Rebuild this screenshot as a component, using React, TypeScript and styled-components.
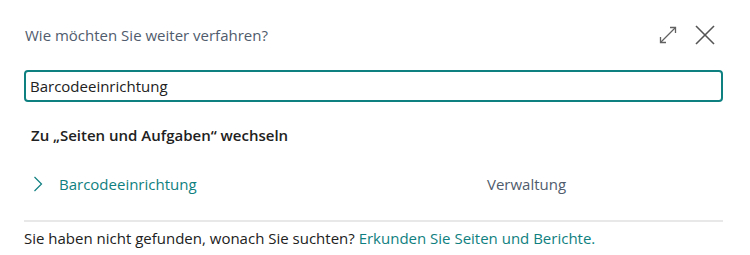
import styled, { createGlobalStyle } from 'styled-components';

const GlobalStyle = createGlobalStyle`
  html, body {
    margin: 0;
    padding: 0;
    background: #ffffff;
  }
  body {
    font-family: 'Open Sans', 'Noto Sans', sans-serif;
    color: #212121;
  }
`;

const Dialog = styled.div`
  width: 750px;
  height: 255px;
  box-sizing: border-box;
  padding: 24px 27px 0 24px;
  background: #ffffff;
`;

const Header = styled.div`
  display: flex;
  align-items: center;
  justify-content: space-between;
  height: 22px;
`;

const Title = styled.h1`
  margin: 0 0 0 1px;
  font-size: 15px;
  font-weight: 400;
  color: #505c6d;
`;

const Actions = styled.div`
  display: flex;
  align-items: center;
  gap: 17px;
  margin-right: 8px;
`;

const IconButton = styled.button`
  display: flex;
  align-items: center;
  justify-content: center;
  padding: 0;
  border: 0;
  background: none;
  cursor: pointer;
`;

const SearchInput = styled.input`
  display: block;
  width: 100%;
  height: 32px;
  margin-top: 24px;
  box-sizing: border-box;
  padding: 0 4px;
  border: 2px solid #0f8080;
  border-radius: 4px;
  font-family: inherit;
  font-size: 15px;
  color: #212121;
  outline: none;
`;

const SectionHeading = styled.h2`
  margin: 22px 0 0 7px;
  font-size: 15px;
  line-height: 22px;
  font-weight: 600;
  color: #212121;
`;

const ResultRow = styled.div`
  display: grid;
  grid-template-columns: 26px 428px 1fr;
  align-items: center;
  height: 40px;
  margin-top: 18px;
  padding-left: 9px;
`;

const ResultLink = styled.a`
  font-size: 15px;
  color: #0f7f80;
  text-decoration: none;
`;

const Category = styled.span`
  font-size: 15px;
  color: #505c6d;
`;

const Divider = styled.hr`
  margin: 16px 0 0 0;
  border: 0;
  height: 2px;
  background: #e8e8e8;
`;

const Footer = styled.p`
  margin: 5px 0 0 0;
  font-size: 15px;
  line-height: 22px;
  color: #212121;
`;

const FooterLink = styled.a`
  color: #0f7f80;
  text-decoration: none;
`;

const ExpandIcon = () => (
  <svg width="20" height="20" viewBox="0 0 20 20" fill="none" stroke="#616161" strokeWidth="1.3">
    <path d="M2.5 17.5 L17.5 2.5" />
    <path d="M12 2.5 H17.5 V8" />
    <path d="M2.5 12 V17.5 H8" />
  </svg>
);

const CloseIcon = () => (
  <svg width="20" height="20" viewBox="0 0 20 20" fill="none" stroke="#555555" strokeWidth="1.6">
    <path d="M1 1 L19 19" />
    <path d="M19 1 L1 19" />
  </svg>
);

const Chevron = () => (
  <svg width="10" height="16" viewBox="0 0 10 16" fill="none" stroke="#0f7f80" strokeWidth="1.2">
    <path d="M1.5 1 L8.5 8 L1.5 15" />
  </svg>
);

const App = () => (
  <>
    <GlobalStyle />
    <Dialog>
      <Header>
        <Title>Wie möchten Sie weiter verfahren?</Title>
        <Actions>
          <IconButton aria-label="Maximieren">
            <ExpandIcon />
          </IconButton>
          <IconButton aria-label="Schließen">
            <CloseIcon />
          </IconButton>
        </Actions>
      </Header>
      <SearchInput defaultValue="Barcodeeinrichtung" />
      <SectionHeading>Zu „Seiten und Aufgaben“ wechseln</SectionHeading>
      <ResultRow>
        <Chevron />
        <ResultLink href="#">Barcodeeinrichtung</ResultLink>
        <Category>Verwaltung</Category>
      </ResultRow>
      <Divider />
      <Footer>
        Sie haben nicht gefunden, wonach Sie suchten?{' '}
        <FooterLink href="#">Erkunden Sie Seiten und Berichte.</FooterLink>
      </Footer>
    </Dialog>
  </>
);

export default App;
